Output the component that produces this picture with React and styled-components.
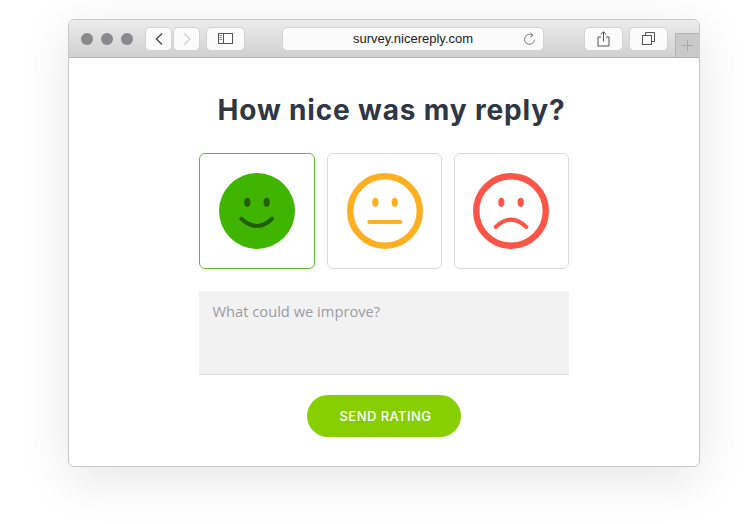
import React from 'react';
import styled, { createGlobalStyle } from 'styled-components';

const GlobalStyle = createGlobalStyle`
  * { box-sizing: border-box; margin: 0; padding: 0; }
  html, body { background: #fff; overflow: hidden; }
  body { font-family: 'Open Sans', sans-serif; }
`;

export default function App() {
  return (
    <>
      <GlobalStyle />
      <Page>
        <BrowserWindow>
          <Toolbar>
            <Dots>
              <Dot />
              <Dot />
              <Dot />
            </Dots>
            <NavGroup>
              <ToolButton $width={27}>
                <svg width="10" height="14" viewBox="0 0 10 14">
                  <path d="M8 1.5 L2.4 7 L8 12.5" fill="none" stroke="#4a4a4c" strokeWidth="1.4" />
                </svg>
              </ToolButton>
              <ToolButton $width={27}>
                <svg width="10" height="14" viewBox="0 0 10 14">
                  <path d="M2.4 1.5 L8 7 L2.4 12.5" fill="none" stroke="#cfcfcf" strokeWidth="1.2" />
                </svg>
              </ToolButton>
            </NavGroup>
            <SidebarButton $width={39}>
              <svg width="15" height="11" viewBox="0 0 15 11">
                <rect x="0.5" y="0.5" width="14" height="10" fill="none" stroke="#555" />
                <path d="M5.5 0.5 V10.5" stroke="#555" />
                <path d="M1.5 2.5 H4 M1.5 4.5 H4 M1.5 6.5 H4" stroke="#888" />
              </svg>
            </SidebarButton>
            <UrlBar>
              <UrlText>survey.nicereply.com</UrlText>
              <Reload>
                <svg width="13" height="14" viewBox="0 0 13 14">
                  <path d="M9.6 3.4 A5 5 0 1 0 11.5 7.5" fill="none" stroke="#777" strokeWidth="1" />
                  <path d="M7.4 0.8 L10 3.3 L7.4 5" fill="none" stroke="#777" strokeWidth="1" />
                </svg>
              </Reload>
            </UrlBar>
            <ShareButton $width={39}>
              <svg width="13" height="16" viewBox="0 0 13 16">
                <path d="M4 6 H1 V15 H12 V6 H9" fill="none" stroke="#555" />
                <path d="M6.5 10.5 V1 M3.8 3.4 L6.5 0.8 L9.2 3.4" fill="none" stroke="#555" />
              </svg>
            </ShareButton>
            <TabsButton $width={39}>
              <svg width="13" height="13" viewBox="0 0 13 13">
                <rect x="0.5" y="3.5" width="9" height="9" fill="#fdfdfd" stroke="#555" />
                <path d="M3.5 3.5 V0.5 H12.5 V9.5 H9.5" fill="none" stroke="#555" />
              </svg>
            </TabsButton>
            <NewTab>
              <svg width="13" height="13" viewBox="0 0 13 13">
                <path d="M6.5 1 V12 M1 6.5 H12" stroke="#a9a9a9" />
              </svg>
            </NewTab>
          </Toolbar>

          <Survey>
            <Title>How nice was my reply?</Title>
            <Form>
              <Faces>
                <FaceCard $selected>
                  <svg width="76" height="76" viewBox="0 0 76 76">
                    <circle cx="38" cy="38" r="38" fill="#3fb500" />
                    <ellipse cx="28.3" cy="29.3" rx="3.1" ry="4.6" fill="#235f00" />
                    <ellipse cx="47.7" cy="29.3" rx="3.1" ry="4.6" fill="#235f00" />
                    <path d="M22.4 45.7 Q38 60.3 53 45.7" fill="none" stroke="#235f00" strokeWidth="4" strokeLinecap="round" />
                  </svg>
                </FaceCard>
                <FaceCard>
                  <svg width="76" height="76" viewBox="0 0 76 76">
                    <circle cx="38" cy="38" r="34.8" fill="none" stroke="#ffb020" strokeWidth="6.4" />
                    <ellipse cx="28.3" cy="29.3" rx="3.1" ry="4.6" fill="#ffb020" />
                    <ellipse cx="47.7" cy="29.3" rx="3.1" ry="4.6" fill="#ffb020" />
                    <path d="M22.4 49 H53.2" fill="none" stroke="#ffb020" strokeWidth="4.2" strokeLinecap="round" />
                  </svg>
                </FaceCard>
                <FaceCard $inset={1}>
                  <svg width="76" height="76" viewBox="0 0 76 76">
                    <circle cx="38" cy="38" r="34.8" fill="none" stroke="#ff5448" strokeWidth="6.4" />
                    <ellipse cx="28.3" cy="29.3" rx="3.1" ry="4.6" fill="#ff5448" />
                    <ellipse cx="47.7" cy="29.3" rx="3.1" ry="4.6" fill="#ff5448" />
                    <path d="M22.7 54 Q38 39.4 53.3 54" fill="none" stroke="#ff5448" strokeWidth="4" strokeLinecap="round" />
                  </svg>
                </FaceCard>
              </Faces>
              <Comment placeholder="What could we improve?" />
              <SendButton type="button">SEND RATING</SendButton>
            </Form>
          </Survey>
        </BrowserWindow>
      </Page>
    </>
  );
}

const Page = styled.div`
  width: 746px;
  height: 524px;
  padding: 19px 0 0 68px;
`;

const BrowserWindow = styled.div`
  width: 632px;
  height: 448px;
  display: flex;
  flex-direction: column;
  background: #fff;
  border: 1px solid #c8c8c8;
  border-radius: 6px;
  box-shadow: 0 12px 50px rgba(0, 0, 0, 0.1);
  overflow: hidden;
`;

const Toolbar = styled.div`
  height: 38px;
  flex: none;
  display: flex;
  align-items: center;
  padding-left: 12px;
  background: linear-gradient(#ececec, #d0d0d0);
  border-bottom: 1px solid #b4b4b4;
`;

const Dots = styled.div`
  display: flex;
  gap: 8px;
`;

const Dot = styled.span`
  width: 12px;
  height: 12px;
  border-radius: 50%;
  background: #8a898e;
`;

const NavGroup = styled.div`
  display: flex;
  gap: 1px;
  margin-left: 12px;
`;

const ToolButton = styled.div`
  width: ${(p) => p.$width}px;
  height: 24px;
  display: flex;
  align-items: center;
  justify-content: center;
  background: #fbfbfb;
  border: 1px solid #d2d2d2;
  border-radius: 5px;
`;

const SidebarButton = styled(ToolButton)`
  margin-left: 6px;
`;

const UrlBar = styled.div`
  width: 262px;
  height: 24px;
  margin-left: 37px;
  display: flex;
  align-items: center;
  justify-content: center;
  position: relative;
  background: #fbfbfb;
  border: 1px solid #d2d2d2;
  border-radius: 5px;
`;

const UrlText = styled.span`
  font-family: 'Liberation Sans', Arial, sans-serif;
  font-size: 13px;
  color: #222;
`;

const Reload = styled.span`
  position: absolute;
  right: 7px;
  top: 4px;
  display: flex;
`;

const ShareButton = styled(ToolButton)`
  margin-left: 40px;
`;

const TabsButton = styled(ToolButton)`
  margin-left: 6px;
`;

const NewTab = styled.div`
  width: 24px;
  height: 24px;
  margin-left: 7px;
  align-self: flex-end;
  display: flex;
  align-items: center;
  justify-content: center;
  background: #c9c9c9;
  border-top: 1px solid #b4b4b4;
  border-left: 1px solid #b4b4b4;
`;

const Survey = styled.div`
  flex: 1;
  display: flex;
  flex-direction: column;
  align-items: center;
  padding-top: 33px;
`;

const Title = styled.h1`
  margin-left: 15px;
  font-family: Inter, sans-serif;
  font-size: 28px;
  line-height: 38px;
  font-weight: 700;
  letter-spacing: 0.85px;
  color: #2f3745;
`;

const Form = styled.div`
  width: 370px;
  margin-top: 24px;
  display: flex;
  flex-direction: column;
  align-items: center;
`;

const Faces = styled.div`
  width: 100%;
  display: grid;
  grid-template-columns: 116px 115px 115px;
  gap: 12px;
`;

const FaceCard = styled.div`
  height: 116px;
  padding-right: ${(p) => p.$inset || 0}px;
  display: flex;
  align-items: center;
  justify-content: center;
  border: 1px solid ${(p) => (p.$selected ? '#5fbd2c' : '#dadada')};
  border-radius: 6px;
`;

const Comment = styled.textarea`
  width: 100%;
  height: 84px;
  margin-top: 22px;
  padding: 9px 13.5px;
  display: block;
  resize: none;
  background: #f2f2f2;
  border: none;
  border-bottom: 1px solid #dcdcdc;
  font-family: 'Open Sans', sans-serif;
  font-size: 14.7px;
  line-height: 22px;
  outline: none;

  &::placeholder { color: #9b9ba1; opacity: 1; }
`;

const SendButton = styled.button`
  width: 154px;
  height: 42px;
  margin-top: 20px;
  padding-left: 3px;
  background: #87cf00;
  color: #fff;
  border: none;
  border-radius: 21px;
  font-family: Inter, sans-serif;
  font-size: 13px;
  font-weight: 500;
  letter-spacing: 0.45px;
`;
